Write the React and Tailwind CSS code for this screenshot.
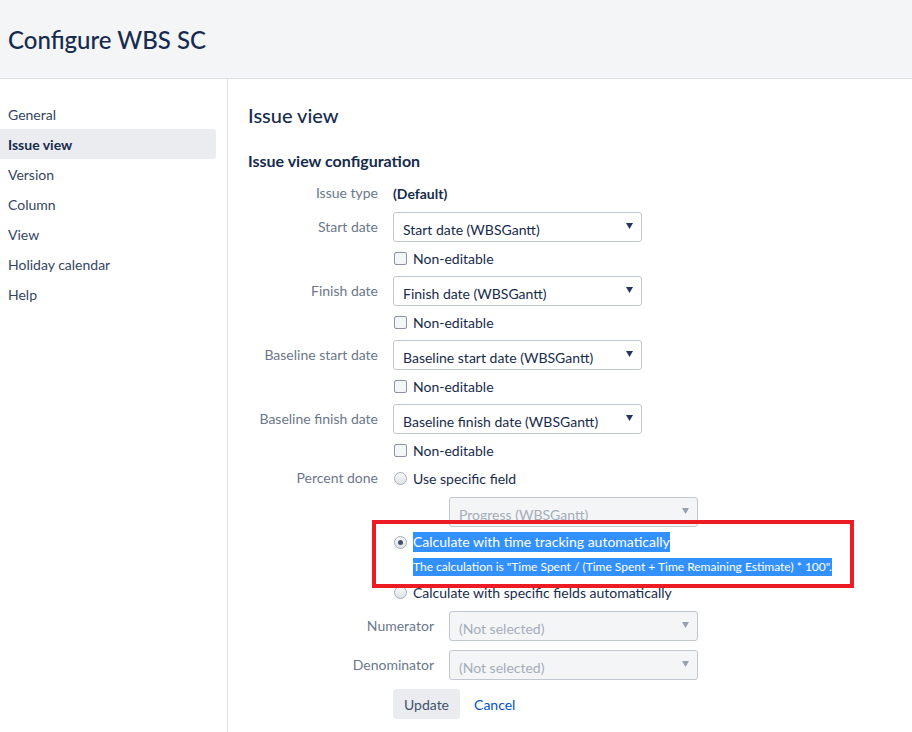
import React from 'react';

const FONT = { fontFamily: 'Lato, "Noto Sans", "Liberation Sans", sans-serif' };

function Caret({ disabled }) {
  return (
    <svg width="7" height="6" viewBox="0 0 7 6" className="shrink-0">
      <path d="M0 0 L7 0 L3.5 6 Z" fill={disabled ? '#97a0af' : '#253858'} />
    </svg>
  );
}

function Select({ value, disabled }) {
  return (
    <div
      className={`flex items-center justify-between h-[30px] w-[249px] rounded-[3px] border pl-[9px] pr-[8px] ${
        disabled ? 'bg-[#f4f5f7] border-[#c1c7d0] text-[#a5adba]' : 'bg-white border-[#c1c7d0] text-[#172b4d]'
      }`}
    >
      <span className="text-[14px] pt-[5px]">{value}</span>
      <span className="self-start pt-[10px]">
        <Caret disabled={disabled} />
      </span>
    </div>
  );
}

function Checkbox({ label }) {
  return (
    <div className="flex items-center h-[20px] gap-[6px] text-[14px] text-[#172b4d]">
      <span className="w-[13px] h-[13px] ml-[1px] rounded-[2px] border border-[#8993a4] bg-[#f4f5f7]" />
      <span>{label}</span>
    </div>
  );
}

function Radio({ checked }) {
  return (
    <span className="relative w-[13px] h-[13px] ml-[1px] rounded-full border border-[#a5adba] bg-gradient-to-b from-[#fafbfc] to-[#dfe1e6] shrink-0 flex items-center justify-center">
      {checked && <span className="w-[5px] h-[5px] rounded-full bg-[#42526e]" />}
    </span>
  );
}

function Label({ children }) {
  return (
    <div className="w-[130px] shrink-0 text-right text-[14px] text-[#6b778c] leading-[20px]">{children}</div>
  );
}

function FieldBlock({ label, value }) {
  return (
    <div className="flex gap-[15px] mb-[8px]">
      <div className="h-[30px] flex items-center">
        <Label>{label}</Label>
      </div>
      <div>
        <Select value={value} />
        <div className="mt-[6px]">
          <Checkbox label="Non-editable" />
        </div>
      </div>
    </div>
  );
}

const NAV = ['General', 'Issue view', 'Version', 'Column', 'View', 'Holiday calendar', 'Help'];

export default function App() {
  return (
    <div className="w-[912px] h-[732px] overflow-hidden bg-white flex flex-col" style={FONT}>
      <header className="h-[79px] shrink-0 bg-[#f4f5f7] border-b border-[#dfe1e6] flex items-center pl-[8px]">
        <h1 className="text-[24px] font-medium text-[#172b4d] mt-[2px]">Configure WBS SC</h1>
      </header>

      <div className="flex flex-1">
        <nav className="w-[228px] shrink-0 border-r border-[#dfe1e6] pt-[20px] pr-[11px]">
          {NAV.map((item) => (
            <div
              key={item}
              className={`h-[30px] flex items-center pl-[8px] text-[14px] rounded-r-[3px] ${
                item === 'Issue view' ? 'bg-[#ebecf0] font-bold text-[#172b4d]' : 'text-[#344563]'
              }`}
            >
              {item}
            </div>
          ))}
        </nav>

        <main className="flex-1 pl-[20px] pt-[22px] text-[#172b4d]">
          <h2 className="text-[20px] font-medium leading-[28px]">Issue view</h2>
          <h3 className="text-[16px] font-bold leading-[24px] mt-[20px]">Issue view configuration</h3>

          <div className="mt-[10px]">
            <div className="flex gap-[15px] items-center h-[20px] mb-[9px]">
              <Label>Issue type</Label>
              <span className="text-[14px] font-bold">(Default)</span>
            </div>

            <FieldBlock label="Start date" value="Start date (WBSGantt)" />
            <FieldBlock label="Finish date" value="Finish date (WBSGantt)" />
            <FieldBlock label="Baseline start date" value="Baseline start date (WBSGantt)" />
            <FieldBlock label="Baseline finish date" value="Baseline finish date (WBSGantt)" />

            <div className="flex gap-[15px] mt-[1px]">
              <Label>Percent done</Label>
              <div className="relative">
                <div className="flex items-center gap-[6px] h-[20px] text-[14px]">
                  <Radio />
                  <span>Use specific field</span>
                </div>
                <div className="ml-[56px] mt-[9px]">
                  <Select value="Progress (WBSGantt)" disabled />
                </div>
                <div className="flex items-center gap-[6px] h-[20px] mt-[5px] text-[14px]">
                  <Radio checked />
                  <span className="bg-[#3390ff] text-white leading-[20px]">Calculate with time tracking automatically</span>
                </div>
                <div className="ml-[20px] mt-[5px] h-[20px] flex items-center">
                  <span className="bg-[#3390ff] text-white text-[12px] leading-[18px]">
                    The calculation is "Time Spent / (Time Spent + Time Remaining Estimate) * 100".
                  </span>
                </div>
                <div className="flex items-center gap-[6px] h-[20px] mt-[5px] text-[14px]">
                  <Radio />
                  <span>Calculate with specific fields automatically</span>
                </div>

                <div className="absolute left-[-21px] top-[52px] w-[482px] h-[68px] border-[4px] border-[#ed1c24]" />
              </div>
            </div>

            <div className="flex gap-[15px] mt-[9px] ml-[56px] items-center">
              <Label>Numerator</Label>
              <Select value="(Not selected)" disabled />
            </div>
            <div className="flex gap-[15px] mt-[9px] ml-[56px] items-center">
              <Label>Denominator</Label>
              <Select value="(Not selected)" disabled />
            </div>

            <div className="flex items-center gap-[14px] mt-[9px] ml-[145px]">
              <button className="h-[30px] px-[11px] rounded-[3px] bg-[#ebecf0] text-[14px] text-[#42526e]">Update</button>
              <a className="text-[14px] text-[#0052cc]">Cancel</a>
            </div>
          </div>
        </main>
      </div>
    </div>
  );
}
